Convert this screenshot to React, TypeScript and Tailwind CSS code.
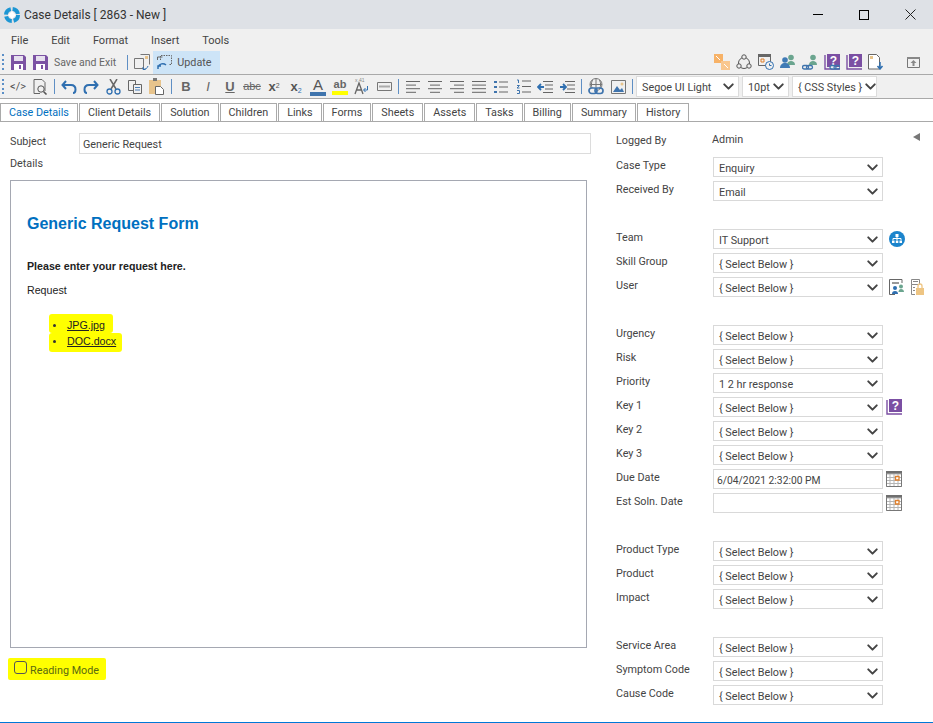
import React from 'react';
import { ChevronDown } from 'lucide-react';

const tabs = ['Case Details', 'Client Details', 'Solution', 'Children', 'Links', 'Forms', 'Sheets', 'Assets', 'Tasks', 'Billing', 'Summary', 'History'];

type Field = { label: string; value?: string; kind?: 'select' | 'date'; icon?: React.ReactNode };

function Icon({ children, w = 20, h = 20 }: { children: React.ReactNode; w?: number; h?: number }) {
  return (
    <svg width={w} height={h} viewBox={`0 0 ${w} ${h}`} fill="none" className="shrink-0">
      {children}
    </svg>
  );
}

const Save = () => (
  <Icon w={15} h={15}>
    <path d="M0 0h13l2 2v13H0z" fill="#7b52a3" />
    <path d="M3 1h9v5H3z" fill="#e6e0ee" />
    <path d="M3 9h9v6H3z" fill="#fff" />
    <path d="M8 10h2v4H8z" fill="#7b52a3" />
  </Icon>
);

const Logo = () => (
  <Icon w={18} h={18}>
    <circle cx="9" cy="9" r="6" stroke="#1c96d4" strokeWidth="4" strokeDasharray="7.5 1.9" />
    <path d="M9 5l4 4-4 4-4-4z" fill="#fff" />
  </Icon>
);

const Grip = () => (
  <div className="flex h-[16px] w-[3px] shrink-0 flex-col justify-between">
    {[0, 1, 2, 3].map((i) => (
      <span key={i} className="h-[2px] w-[2px] bg-[#5b8fc7]" />
    ))}
  </div>
);

const Sep = () => <span className="mx-[3px] h-[15px] w-px shrink-0 bg-[#5f8fc4]" />;

const Btn = ({ children }: { children: React.ReactNode }) => (
  <span className="flex h-[22px] w-[22px] shrink-0 items-center justify-center">{children}</span>
);

const Lines = ({ rows }: { rows: [number, number][] }) => (
  <Icon w={16} h={14}>
    {rows.map(([a, b], i) => (
      <path key={i} d={`M${a} ${1.5 + i * 3.6}H${b}`} stroke="#666" />
    ))}
  </Icon>
);

const Chain = ({ x, y }: { x: number; y: number }) => (
  <>
    <rect x={x} y={y} width="6" height="3.500" rx="1.700" fill="#f0f0f0" stroke="#3f74ad" strokeWidth="1.300" />
    <rect x={x + 4} y={y} width="6" height="3.500" rx="1.700" stroke="#3f74ad" strokeWidth="1.300" />
  </>
);

const Calendar = () => (
  <Icon w={16} h={16}>
    <path d="M0 0h16v3H0z" fill="#6f6f6f" />
    <path d="M.5 3h15v12.500H.5zM4 3v12M8 3v12M12 3v12M.5 6.500h15M.5 9.500h15M.5 12.500h15" stroke="#b5b5b5" />
    <path d="M.5 3v12.500h15V3" stroke="#777" />
    <path d="M9.500 5.500h3.500V9H9.500z" fill="#fff" stroke="#e0802c" strokeWidth="1.300" />
  </Icon>
);

const Book = ({ link }: { link?: boolean }) => (
  <Icon w={16} h={16}>
    <path d="M3 0h13v13H3z" fill="#7b4fa3" />
    <path d="M1 1v14h15" stroke="#7b4fa3" strokeWidth="1.400" />
    <text x="9.500" y="11" fontSize="12" fontWeight="700" fill="#fff" textAnchor="middle" fontFamily="'Liberation Sans', sans-serif">?</text>
    {link && <Chain x={6} y={11.500} />}
  </Icon>
);

const People = ({ link }: { link?: boolean }) => (
  <Icon w={16} h={16}>
    <circle cx="11" cy="3.500" r="2.800" fill="#6ba58f" />
    <path d="M7 11c0-3 2-4 4-4s4 1 4 4z" fill="#6ba58f" />
    {link ? (
      <Chain x={0.500} y={11.500} />
    ) : (
      <>
        <circle cx="5" cy="6" r="2.800" fill="#3f7ab5" />
        <path d="M0 14c0-3 2-5 5-5s5 2 5 5z" fill="#3f7ab5" />
      </>
    )}
  </Icon>
);

const ToolbarTwo = () => (
  <div className="flex h-[23px] items-center bg-[#f0f0f0] pl-[2px]">
    <Grip />
    <span className="w-[2px]" />
    <Btn>
      <span className="text-[11px] leading-none text-[#555]">&lt;/&gt;</span>
    </Btn>
    <Btn>
      <Icon w={15} h={16}>
        <path d="M1 .5h8l3 3V12M1 .5v14h6" stroke="#666" />
        <circle cx="8" cy="10" r="3.200" stroke="#555" />
        <path d="M10.500 12.500l3 3" stroke="#555" strokeWidth="1.600" />
      </Icon>
    </Btn>
    <Sep />
    <Btn>
      <Icon w={16} h={14}>
        <path d="M5 1L1.500 5 5 9M2 5h8c3 0 4.500 2 4.500 4.500S13 13 12 13" stroke="#2f6fb0" strokeWidth="2" />
      </Icon>
    </Btn>
    <Btn>
      <Icon w={16} h={14}>
        <path d="M11 1l3.500 4L11 9M14 5H6C3 5 1.500 7 1.500 9.500S3 13 4 13" stroke="#2f6fb0" strokeWidth="2" />
      </Icon>
    </Btn>
    <Btn>
      <Icon w={15} h={16}>
        <path d="M4 0l6 10M11 0L5 10" stroke="#666" strokeWidth="1.500" />
        <circle cx="3.500" cy="12.500" r="2.500" stroke="#2f6fb0" strokeWidth="1.300" />
        <circle cx="11.500" cy="12.500" r="2.500" stroke="#2f6fb0" strokeWidth="1.300" />
      </Icon>
    </Btn>
    <Btn>
      <Icon w={15} h={14}>
        <path d="M.5.5h7v10h-7z" stroke="#666" />
        <path d="M5.500 4.500h8v9h-8z" fill="#f0f0f0" stroke="#666" />
        <path d="M7 7.500h5M7 10h5" stroke="#4a7fb8" />
      </Icon>
    </Btn>
    <Btn>
      <Icon w={16} h={17}>
        <path d="M0 2h12v14H0z" fill="#e8c48c" />
        <path d="M4 0h4v3H4z" fill="#777" />
        <path d="M6.500 8.500h5l3 3v5h-8z" fill="#fff" stroke="#666" />
      </Icon>
    </Btn>
    <Sep />
    {[
      ['B', 'font-bold'],
      ['I', 'italic'],
      ['U', 'font-bold underline'],
    ].map(([t, c]) => (
      <Btn key={t}>
        <span className={`font-['Liberation_Sans',sans-serif] text-[13px] leading-none text-[#666] ${c}`}>{t}</span>
      </Btn>
    ))}
    <Btn>
      <span className="font-['Liberation_Sans',sans-serif] text-[11px] leading-none text-[#666] line-through">abc</span>
    </Btn>
    <Btn>
      <span className="font-['Liberation_Sans',sans-serif] text-[13px] font-bold leading-none text-[#555]">
        x<sup className="text-[7px] font-normal">2</sup>
      </span>
    </Btn>
    <Btn>
      <span className="font-['Liberation_Sans',sans-serif] text-[13px] font-bold leading-none text-[#555]">
        x<sub className="text-[7px] font-normal text-[#2f6fb0]">2</sub>
      </span>
    </Btn>
    <Btn>
      <span className="flex w-[16px] flex-col items-center border-b-[4px] border-[#3f74ad] font-['Liberation_Sans',sans-serif] text-[15px] leading-[14px] text-[#555]">A</span>
    </Btn>
    <Btn>
      <span className="flex w-[16px] flex-col items-center border-b-[4px] border-[#ffff00] font-['Liberation_Sans',sans-serif] text-[11px] font-bold leading-[13px] text-[#666]">ab</span>
    </Btn>
    <Btn>
      <Icon w={16} h={17}>
        <path d="M1 16L5 5l4 11M2.500 12h5" stroke="#666" strokeWidth="1.300" />
        <path d="M13.500 8v4H10M11.500 10l-2 2 2 2" stroke="#2f6fb0" />
        <text x="1" y="4" fontSize="5" fill="#888" fontFamily="'Liberation Sans', sans-serif">x 41</text>
      </Icon>
    </Btn>
    <Btn>
      <Icon w={15} h={9}>
        <path d="M.5.5h14v8H.5z" stroke="#777" />
        <path d="M2 4.500h11" stroke="#aaa" strokeWidth="2" />
      </Icon>
    </Btn>
    <Sep />
    <Btn><Lines rows={[[1, 15], [1, 11], [1, 15], [1, 11]]} /></Btn>
    <Btn><Lines rows={[[1, 15], [3, 13], [1, 15], [3, 13]]} /></Btn>
    <Btn><Lines rows={[[1, 15], [5, 15], [1, 15], [5, 15]]} /></Btn>
    <Btn><Lines rows={[[1, 15], [1, 15], [1, 15], [1, 15]]} /></Btn>
    <Btn>
      <Icon w={14} h={14}>
        <path d="M5 2h9M5 7h9M5 12h9" stroke="#666" />
        <path d="M0 1h3v2H0zM0 6h3v2H0zM0 11h3v2H0z" fill="#3f74ad" />
      </Icon>
    </Btn>
    <Btn>
      <Icon w={15} h={15}>
        <path d="M6 2h9M6 7.500h9M6 13h9" stroke="#666" />
        <path d="M1 1h1.500v3M1 6.500h2.500L1 9h2.500M1 11.500h2.500v3H1" stroke="#3f74ad" />
      </Icon>
    </Btn>
    <Btn>
      <Icon w={16} h={12}>
        <path d="M6 .5h10M8 4h8M8 8h8M6 11.500h10" stroke="#666" />
        <path d="M7 6H2M4 3L1 6l3 3" stroke="#2f6fb0" strokeWidth="1.800" />
      </Icon>
    </Btn>
    <Btn>
      <Icon w={16} h={12}>
        <path d="M6 .5h10M8 4h8M8 8h8M6 11.500h10" stroke="#666" />
        <path d="M1 6h5M4 3l3 3-3 3" stroke="#2f6fb0" strokeWidth="1.800" />
      </Icon>
    </Btn>
    <Sep />
    <Btn>
      <Icon w={16} h={17}>
        <circle cx="8" cy="6.500" r="6" stroke="#777" />
        <path d="M2 6.500h12M8 .5v12M4.500 2c-1.500 3-1.500 6 0 9M11.500 2c1.500 3 1.500 6 0 9" stroke="#777" />
        <rect x="1" y="10" width="8" height="5.500" rx="2.700" fill="#f0f0f0" stroke="#3f74ad" strokeWidth="1.700" />
        <rect x="7" y="10" width="8" height="5.500" rx="2.700" stroke="#3f74ad" strokeWidth="1.700" />
      </Icon>
    </Btn>
    <Btn>
      <Icon w={15} h={14}>
        <path d="M.5.5h14v13H.5z" stroke="#777" />
        <path d="M2 12l4-6 3 4 2-2 2 4z" fill="#3f74ad" />
        <circle cx="11" cy="4" r="1.500" fill="#e8c48c" />
      </Icon>
    </Btn>
    <Sep />
    <div className="flex gap-[3px]">
      {[
        ['Segoe UI Light', 'w-[103px]'],
        ['10pt', 'w-[47px]'],
        ['{ CSS Styles }', 'w-[85px]'],
      ].map(([t, w]) => (
        <div key={t} className={`flex h-[21px] items-center justify-between border border-[#dcdcdc] bg-white pl-[5px] pr-px text-[#444] ${w}`}>
          <span className="whitespace-nowrap pt-[3px]">{t}</span>
          <ChevronDown size={17} strokeWidth={2.800} className="shrink-0 text-[#444]" />
        </div>
      ))}
    </div>
  </div>
);

const ToolbarOne = () => (
  <div className="flex h-[25px] items-center border-b border-[#a9a9a9] bg-[#f0f0f0] pl-[2px]">
    <Grip />
    <span className="ml-[6px]"><Save /></span>
    <span className="ml-[7px]"><Save /></span>
    <span className="ml-[6px] pt-[2px] text-[10.500px] text-[#666]">Save and Exit</span>
    <span className="ml-[11px] h-[15px] w-px bg-[#5f8fc4]" />
    <span className="ml-[6px]">
      <Icon w={17} h={16}>
        <path d="M.5 4.500h9v10h-9zM6.500.5h9v10" stroke="#777" />
        <path d="M11 2h3v3h-3z" fill="#e8c48c" />
        <path d="M14 12a4 4 0 0 1-5 3M9 13v2.500h2.500" stroke="#2f6fb0" />
      </Icon>
    </span>
    <div className="ml-[2px] flex h-[23px] items-center gap-[4px] bg-[#cde4f7] pl-[4px] pr-[8px] text-[#555]">
      <Icon w={16} h={16}>
        <path d="M3.500 6V1.500h11v9h-3" stroke="#666" strokeDasharray="1.500 1" />
        <path d="M.5 6V3h5" stroke="#666" />
        <path d="M1 13a5 5 0 0 1 8-2M1 15v-3h3" stroke="#2f6fb0" strokeWidth="1.500" />
      </Icon>
      <span className="pt-[2px]">Update</span>
    </div>
    <div className="ml-auto flex items-center gap-[6px] pr-[13px]">
      <Icon w={16} h={16}>
        <path d="M0 0h9v9H0z" fill="#f7b267" />
        <path d="M7 7h9v9H7z" fill="#f9c78f" />
        <path d="M2 2l4 4M14 14l-4-4" stroke="#fff" />
      </Icon>
      <Icon w={16} h={16}>
        <circle cx="8" cy="9" r="5.500" stroke="#555" />
        <circle cx="8" cy="3" r="2.200" fill="#f0f0f0" stroke="#555" />
        <circle cx="3" cy="12" r="2.200" fill="#f0f0f0" stroke="#555" />
        <circle cx="13" cy="12" r="2.200" fill="#f0f0f0" stroke="#555" />
      </Icon>
      <Icon w={16} h={16}>
        <path d="M.5.5h12v11H.5z" stroke="#666" />
        <path d="M0 0h13v3H0z" fill="#666" />
        <path d="M3 5h3v3H3z" stroke="#e0802c" />
        <circle cx="11.500" cy="11.500" r="4" fill="#f0f0f0" stroke="#2f6fb0" />
        <path d="M11.500 9.500v2h2" stroke="#2f6fb0" />
      </Icon>
      <People />
      <People link />
      <Book link />
      <Book />
      <Icon w={16} h={16}>
        <path d="M.5.5h8l3 3V15H.5z" stroke="#666" fill="#fff" />
        <path d="M2 2h3v3H2z" fill="#e8c48c" />
        <path d="M12 8v6M9.500 12l2.500 3 2.500-3" stroke="#2f6fb0" strokeWidth="1.500" />
      </Icon>
      <span className="ml-[17px]">
        <Icon w={13} h={11}>
          <path d="M.5.5h12v10H.5z" stroke="#777" />
          <path d="M0 0h13v2H0z" fill="#888" />
          <path d="M6.500 3l3 3h-2v3h-2V6h-2z" fill="#888" />
        </Icon>
      </span>
    </div>
  </div>
);

const groups: Field[][] = [
  [
    { label: 'Case Type', value: 'Enquiry' },
    { label: 'Received By', value: 'Email' },
  ],
  [
    {
      label: 'Team',
      value: 'IT Support',
      icon: (
        <Icon w={16} h={16}>
          <circle cx="8" cy="8" r="8" fill="#1b84cc" />
          <path d="M6.500 3h3v3h-3zM3 9.500h2.500V12H3zM6.800 9.500h2.500V12H6.800zM10.500 9.500H13V12h-2.500z" fill="#fff" />
          <path d="M8 6v3M4 9V7.500h8V9" stroke="#fff" />
        </Icon>
      ),
    },
    { label: 'Skill Group' },
    {
      label: 'User',
      icon: (
        <span className="flex gap-[7px]">
          <Icon w={15} h={16}>
            <path d="M13 4V.5H.5v15H6" stroke="#666" />
            <path d="M3 3h7v2H3z" fill="#999" />
            <circle cx="6" cy="9" r="2" fill="#2f6fb0" />
            <path d="M3 15c0-2 1-3 3-3s3 1 3 3z" fill="#2f6fb0" />
            <circle cx="12" cy="7.500" r="2" fill="#6ba58f" />
            <path d="M9.500 13c0-2 1-3 2.500-3s3 1 3 3z" fill="#6ba58f" />
          </Icon>
          <Icon w={13} h={16}>
            <path d="M.5.5h8v5h-8zM.5 5.500v10H4" stroke="#888" />
            <path d="M2 2.500h5M2 8.500h2M2 11.500h2" stroke="#888" />
            <path d="M5 9h8v7H5z" fill="#eec583" />
            <path d="M7 9V7a2 2 0 0 1 4 0v2" stroke="#eec583" strokeWidth="1.300" />
          </Icon>
        </span>
      ),
    },
  ],
  [
    { label: 'Urgency' },
    { label: 'Risk' },
    { label: 'Priority', value: '1 2 hr response' },
    { label: 'Key 1', icon: <span className="-ml-[3px]"><Book /></span> },
    { label: 'Key 2' },
    { label: 'Key 3' },
    { label: 'Due Date', value: '6/04/2021 2:32:00 PM', kind: 'date', icon: <span className="-ml-[3px]"><Calendar /></span> },
    { label: 'Est Soln. Date', value: '', kind: 'date', icon: <span className="-ml-[3px]"><Calendar /></span> },
  ],
  [
    { label: 'Product Type' },
    { label: 'Product' },
    { label: 'Impact' },
  ],
  [
    { label: 'Service Area' },
    { label: 'Symptom Code' },
    { label: 'Cause Code' },
  ],
];

const FieldRow = ({ field }: { field: Field }) => (
  <div className="flex h-[20px] items-start">
    <span className="w-[97px] shrink-0 whitespace-nowrap pt-px text-[#444]">{field.label}</span>
    {field.kind === 'date' ? (
      <div className="flex h-full w-[170px] shrink-0 items-center border border-[#d9d9d9] bg-white pl-[3px] pt-[3px] text-[10.300px] text-[#444]">{field.value}</div>
    ) : (
      <div className="flex h-full w-[170px] shrink-0 items-center justify-between border border-[#d9d9d9] bg-white pl-[5px] pr-px text-[#444]">
        <span className="pt-[4px]">{field.value ?? '{ Select Below }'}</span>
        <ChevronDown size={17} strokeWidth={2.800} className="text-[#444]" />
      </div>
    )}
    {field.icon && <span className="ml-[6px] flex h-full items-center">{field.icon}</span>}
  </div>
);

export default function App() {
  return (
    <div className="flex h-[723px] w-[933px] flex-col overflow-hidden border-b border-[#0078d7] bg-white font-['Roboto',sans-serif] text-[10.800px] text-[#444]">
      {/* window title */}
      <div className="flex h-[29px] shrink-0 items-center bg-[#dee1e6] pl-[3px]">
        <Logo />
        <span className="ml-[3px] text-[12px] text-[#333]">Case Details [ 2863 - New ]</span>
        <div className="ml-auto flex items-center gap-[36px] pr-[17px]">
          <span className="h-px w-[10px] bg-black" />
          <span className="h-[10px] w-[10px] border border-black" />
          <Icon w={11} h={11}>
            <path d="M.5.5l10 10M10.500.5l-10 10" stroke="#222" />
          </Icon>
        </div>
      </div>

      {/* menu */}
      <div className="flex h-[21px] shrink-0 items-center gap-[23px] bg-[#f0f0f0] pl-[11px] pt-[4px] text-[11px] text-[#444]">
        {['File', 'Edit', 'Format', 'Insert', 'Tools'].map((m) => (
          <span key={m}>{m}</span>
        ))}
      </div>

      <ToolbarOne />
      <ToolbarTwo />

      {/* tabs */}
      <div className="flex h-[24px] shrink-0 items-end gap-px border-t border-b border-[#a9a9a9] bg-white">
        {tabs.map((t, i) => (
          <span
            key={t}
            className={`flex h-[18px] items-center border border-b-0 border-[#aaa] px-[8px] pt-[2px] ${i === 0 ? 'text-[#0070c0]' : 'text-[#444]'}`}
          >
            {t}
          </span>
        ))}
      </div>

      <div className="flex min-h-0 flex-1">
        {/* left side */}
        <div className="flex w-[608px] shrink-0 flex-col pl-[10px]">
          <div className="mt-[11px] flex h-[21px] items-start">
            <span className="w-[69px] shrink-0 pt-px">Subject</span>
            <div className="flex h-full w-[512px] items-center border border-[#dcdcdc] pl-[3px] pt-[3px]">Generic Request</div>
          </div>
          <span className="h-[26px] pt-px leading-[17px]">Details</span>
          <div className="flex h-[468px] w-[577px] flex-col border border-[#a5a8b2] pl-[16px] font-['Liberation_Sans',sans-serif] text-[10.670px] text-[#222]">
            <h1 className="mt-[33px] text-[16px] font-bold leading-[19px] text-[#0070c0]">Generic Request Form</h1>
            <p className="mt-[27px] font-bold leading-[13px]">Please enter your request here.</p>
            <p className="mt-[11px] leading-[13px]">Request</p>
            <ul className="ml-[22px] mt-[20px] w-fit">
              <li className="flex h-[16px] w-[64px] items-center gap-[11px] rounded-[3px] bg-[#ffff00] pl-[4px] shadow-[0_-3px_0_#ffff00]">
                <span className="h-[3px] w-[3px] rounded-full bg-[#333]" />
                <span className="underline">JPG.jpg</span>
              </li>
              <li className="flex h-[16px] w-[73px] items-center gap-[11px] rounded-[3px] bg-[#ffff00] pl-[4px] shadow-[0_3px_0_#ffff00]">
                <span className="h-[3px] w-[3px] rounded-full bg-[#333]" />
                <span className="underline">DOC.docx</span>
              </li>
            </ul>
          </div>
          <label className="-ml-[2px] mt-[10px] flex h-[22px] w-[98px] items-center gap-[3px] rounded-[2px] bg-[#ffff00] pl-[6px] text-[#5a6a10]">
            <input type="checkbox" className="-mt-[4px] h-[13px] w-[13px] appearance-none rounded-[3px] border border-[#555]" />
            <span className="mt-[4px] whitespace-nowrap">Reading Mode</span>
          </label>
        </div>

        {/* right side */}
        <div className="flex min-w-0 flex-1 flex-col pl-[8px] pr-[13px] pt-[10px]">
          <div className="flex h-[25px] items-start">
            <span className="w-[96px] shrink-0 pt-px">Logged By</span>
            <span>Admin</span>
            <span className="ml-auto mt-[1px] h-0 w-0 border-y-[4px] border-r-[7px] border-y-transparent border-r-[#777]" />
          </div>
          <div className="flex flex-col gap-[28px]">
            {groups.map((g, i) => (
              <div key={i} className="flex flex-col gap-[4px]">
                {g.map((f) => (
                  <FieldRow key={f.label} field={f} />
                ))}
              </div>
            ))}
          </div>
        </div>
      </div>
    </div>
  );
}
